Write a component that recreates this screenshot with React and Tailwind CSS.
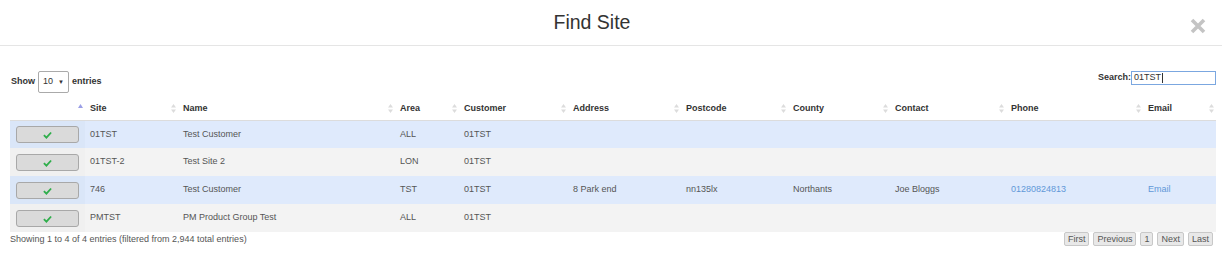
import React from 'react';

const columns = [
  { key: 'btn', label: '', width: 'w-[75px]', sort: 'asc' },
  { key: 'site', label: 'Site', width: 'w-[93px]' },
  { key: 'name', label: 'Name', width: 'w-[217px]' },
  { key: 'area', label: 'Area', width: 'w-[64px]' },
  { key: 'customer', label: 'Customer', width: 'w-[109px]' },
  { key: 'address', label: 'Address', width: 'w-[113px]' },
  { key: 'postcode', label: 'Postcode', width: 'w-[107px]' },
  { key: 'county', label: 'County', width: 'w-[102px]' },
  { key: 'contact', label: 'Contact', width: 'w-[116px]' },
  { key: 'phone', label: 'Phone', width: 'w-[137px]' },
  { key: 'email', label: 'Email', width: 'w-[73px]' },
];

const rows = [
  { site: '01TST', name: 'Test Customer', area: 'ALL', customer: '01TST' },
  { site: '01TST-2', name: 'Test Site 2', area: 'LON', customer: '01TST' },
  {
    site: '746',
    name: 'Test Customer',
    area: 'TST',
    customer: '01TST',
    address: '8 Park end',
    postcode: 'nn135lx',
    county: 'Northants',
    contact: 'Joe Bloggs',
    phone: '01280824813',
    email: 'Email',
  },
  { site: 'PMTST', name: 'PM Product Group Test', area: 'ALL', customer: '01TST' },
];

const SortBoth = () => (
  <svg width="5" height="9" viewBox="0 0 5 9" className="shrink-0">
    <path d="M2.5 0 L5 3.5 L0 3.5 Z" fill="#dcdcdc" />
    <path d="M2.5 9 L5 5.5 L0 5.5 Z" fill="#dcdcdc" />
  </svg>
);

const SortAsc = () => (
  <svg width="5" height="9" viewBox="0 0 5 9" className="shrink-0">
    <path d="M2.5 0 L5 4 L0 4 Z" fill="#9b9fe6" />
  </svg>
);

const Check = () => (
  <svg width="9" height="8" viewBox="0 0 10 8" className="mt-[2px]">
    <path d="M1 4.2 L3.8 7 L9 1.2" fill="none" stroke="#2fae4b" strokeWidth="2" />
  </svg>
);

const PageButton = ({ children }) => (
  <span className="h-[14px] px-[3px] flex items-center rounded-[2px] border border-[#c8c8c8] bg-[#e8e8e8] text-[#555] leading-none">
    {children}
  </span>
);

export default function App() {
  return (
    <div className="w-[1222px] h-[255px] bg-white text-[9px] text-[#333] font-['Liberation_Sans',Arial,sans-serif] overflow-hidden">
      <div className="h-[46px] border-b border-[#e5e5e5] flex items-center justify-between pl-[30px] pr-[16px]">
        <div className="flex-1 text-center text-[19.5px] text-[#333] mr-[36px]">Find Site</div>
        <svg width="16" height="16" viewBox="0 0 16 16" className="mt-[6px]">
          <path d="M2 2 L14 14 M14 2 L2 14" stroke="#c4c4c4" strokeWidth="3.6" />
        </svg>
      </div>

      <div className="pl-[10px] pr-[6px] pt-[25px]">
        <div className="h-[27px] flex justify-between items-start">
          <div className="flex items-center gap-[3px] font-bold">
            <span className="ml-[1px]">Show</span>
            <span className="h-[22px] w-[31px] border border-[#aaa] rounded-[2px] bg-white flex items-center justify-between px-[4px] font-normal">
              <span>10</span>
              <span className="text-[6px]">▼</span>
            </span>
            <span>entries</span>
          </div>
          <div className="flex items-center font-bold">
            <span>Search:</span>
            <span className="h-[14px] w-[85px] border border-[#7ba7e0] bg-white flex items-center px-[2px] font-normal">
              01TST<span className="w-px h-[10px] bg-[#333] ml-px" />
            </span>
          </div>
        </div>

        <table className="table-fixed w-[1206px] border-collapse">
          <thead>
            <tr className="h-[22px] border-b border-[#dcdcdc]">
              {columns.map((c) => (
                <th key={c.key} className={`${c.width} p-0 font-bold text-left`}>
                  <div className="flex items-center justify-between pl-[5px] pr-[2px]">
                    <span>{c.label}</span>
                    {c.sort === 'asc' ? <SortAsc /> : <SortBoth />}
                  </div>
                </th>
              ))}
            </tr>
          </thead>
          <tbody className="text-[#555]">
            {rows.map((r, i) => {
              const odd = i % 2 === 0;
              return (
                <tr key={r.site} className={`h-[28px] ${odd ? 'bg-[#dfeafc]' : 'bg-[#f3f3f3]'}`}>
                  <td className={`p-0 pl-[6px] ${odd ? 'bg-[#dae6f8]' : 'bg-[#f0f0f0]'}`}>
                    <span className="w-[63px] h-[17px] rounded-[3px] border border-[#a8a8a8] bg-[#dadada] flex items-center justify-center">
                      <Check />
                    </span>
                  </td>
                  <td className="p-0 pl-[5px]">{r.site}</td>
                  <td className="p-0 pl-[5px]">{r.name}</td>
                  <td className="p-0 pl-[5px]">{r.area}</td>
                  <td className="p-0 pl-[5px]">{r.customer}</td>
                  <td className="p-0 pl-[5px]">{r.address}</td>
                  <td className="p-0 pl-[5px]">{r.postcode}</td>
                  <td className="p-0 pl-[5px]">{r.county}</td>
                  <td className="p-0 pl-[5px]">{r.contact}</td>
                  <td className="p-0 pl-[5px] text-[#6198d8]">{r.phone}</td>
                  <td className="p-0 pl-[5px] text-[#6198d8]">{r.email}</td>
                </tr>
              );
            })}
          </tbody>
        </table>

        <div className="flex justify-between items-start w-[1206px]">
          <span className="text-[#555] mt-px">Showing 1 to 4 of 4 entries (filtered from 2,944 total entries)</span>
          <div className="flex gap-[4px] pr-[3px]">
            <PageButton>First</PageButton>
            <PageButton>Previous</PageButton>
            <PageButton>1</PageButton>
            <PageButton>Next</PageButton>
            <PageButton>Last</PageButton>
          </div>
        </div>
      </div>
    </div>
  );
}
